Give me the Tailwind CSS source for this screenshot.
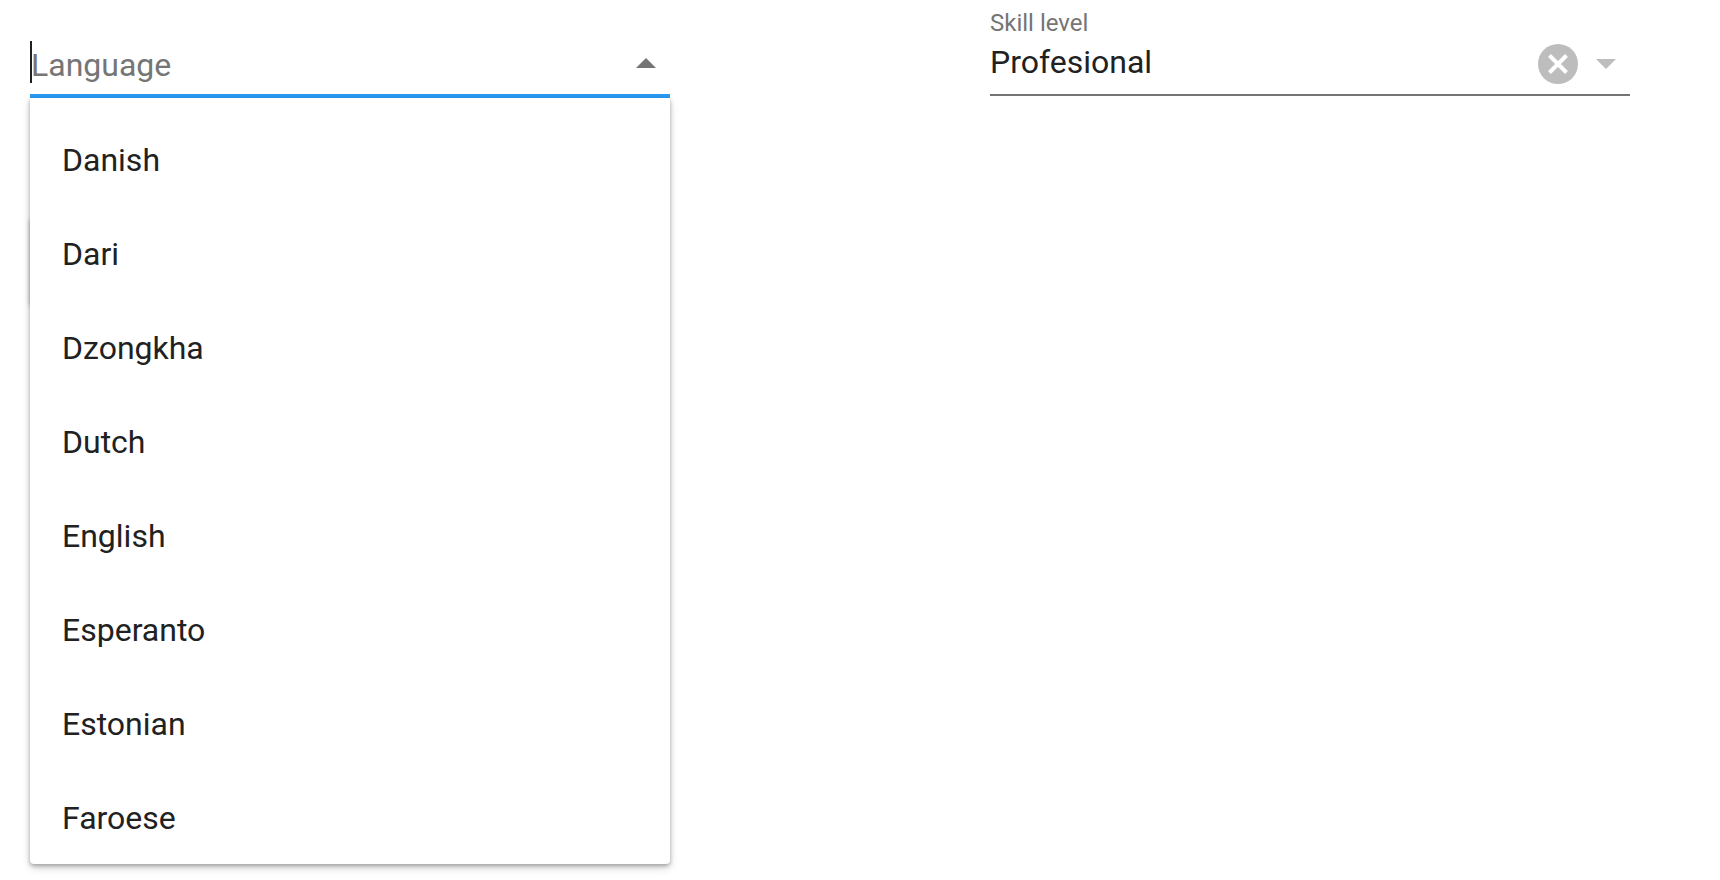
<!DOCTYPE html>
<html lang="en">
<head>
<meta charset="utf-8">
<meta name="viewport" content="width=device-width, initial-scale=1">
<title>Language skills</title>
<script src="https://cdn.jsdelivr.net/npm/@tailwindcss/browser@4"></script>
</head>
<body class="min-h-screen bg-white font-[Roboto,sans-serif] text-[32px] text-[#212121]">
<form class="grid grid-cols-2 items-start gap-x-80 pl-[30px] pr-[90px]">
  <div class="relative">
    <div class="flex h-[98px] items-center border-b-4 border-[#2a9bf4] pt-8 pr-3.5">
      <span class="-mr-0.5 mb-0.5 h-[42px] w-0.5 shrink-0 bg-[#212121]"></span>
      <input type="text" role="combobox" aria-label="Language" aria-expanded="true" aria-controls="languages" placeholder="Language" class="h-12 min-w-0 grow bg-transparent pt-1 pl-px leading-[44px] outline-none placeholder:text-[#757575]">
      <button type="button" aria-label="Close list" class="shrink-0"><svg class="block h-2.5 w-5" viewBox="0 0 20 10"><path d="M0 10 10 0 20 10Z" fill="#757575"/></svg></button>
    </div>
    <div class="mt-[118px] h-[88px] w-44 rounded-sm shadow-[0_3px_5px_rgba(0,0,0,0.3)]"></div>
    <ul id="languages" role="listbox" aria-label="Languages" class="absolute inset-x-0 top-[98px] h-[766px] overflow-hidden rounded-b bg-white pt-[15px] shadow-[0_2px_4px_rgba(0,0,0,0.3),0_4px_10px_rgba(0,0,0,0.14)]">
      <li role="option" class="flex h-[94px] items-center px-8">Danish</li>
      <li role="option" class="flex h-[94px] items-center px-8">Dari</li>
      <li role="option" class="flex h-[94px] items-center px-8">Dzongkha</li>
      <li role="option" class="flex h-[94px] items-center px-8">Dutch</li>
      <li role="option" class="flex h-[94px] items-center px-8">English</li>
      <li role="option" class="flex h-[94px] items-center px-8">Esperanto</li>
      <li role="option" class="flex h-[94px] items-center px-8">Estonian</li>
      <li role="option" class="flex h-[94px] items-center px-8">Faroese</li>
    </ul>
  </div>
  <div class="flex h-24 flex-col border-b-2 border-[#757575] pt-[9px] pr-3.5">
    <label for="skill" class="text-2xl leading-7 text-[#757575]">Skill level</label>
    <div class="flex items-center pt-[3px]">
      <input id="skill" type="text" role="combobox" aria-expanded="false" value="Profesional" class="h-12 min-w-0 grow bg-transparent pb-1 leading-[44px] outline-none">
      <button type="button" aria-label="Clear" class="mr-[18px] shrink-0"><svg class="block size-10" viewBox="0 0 40 40"><circle cx="20" cy="20" r="20" fill="#bdbdbd"/><path d="M11.5 11.5 28.5 28.5M28.5 11.5 11.5 28.5" stroke="#fff" stroke-width="4"/></svg></button>
      <button type="button" aria-label="Open list" class="shrink-0"><svg class="block h-2.5 w-5" viewBox="0 0 20 10"><path d="M0 0H20L10 10Z" fill="#bdbdbd"/></svg></button>
    </div>
  </div>
</form>
</body>
</html>
